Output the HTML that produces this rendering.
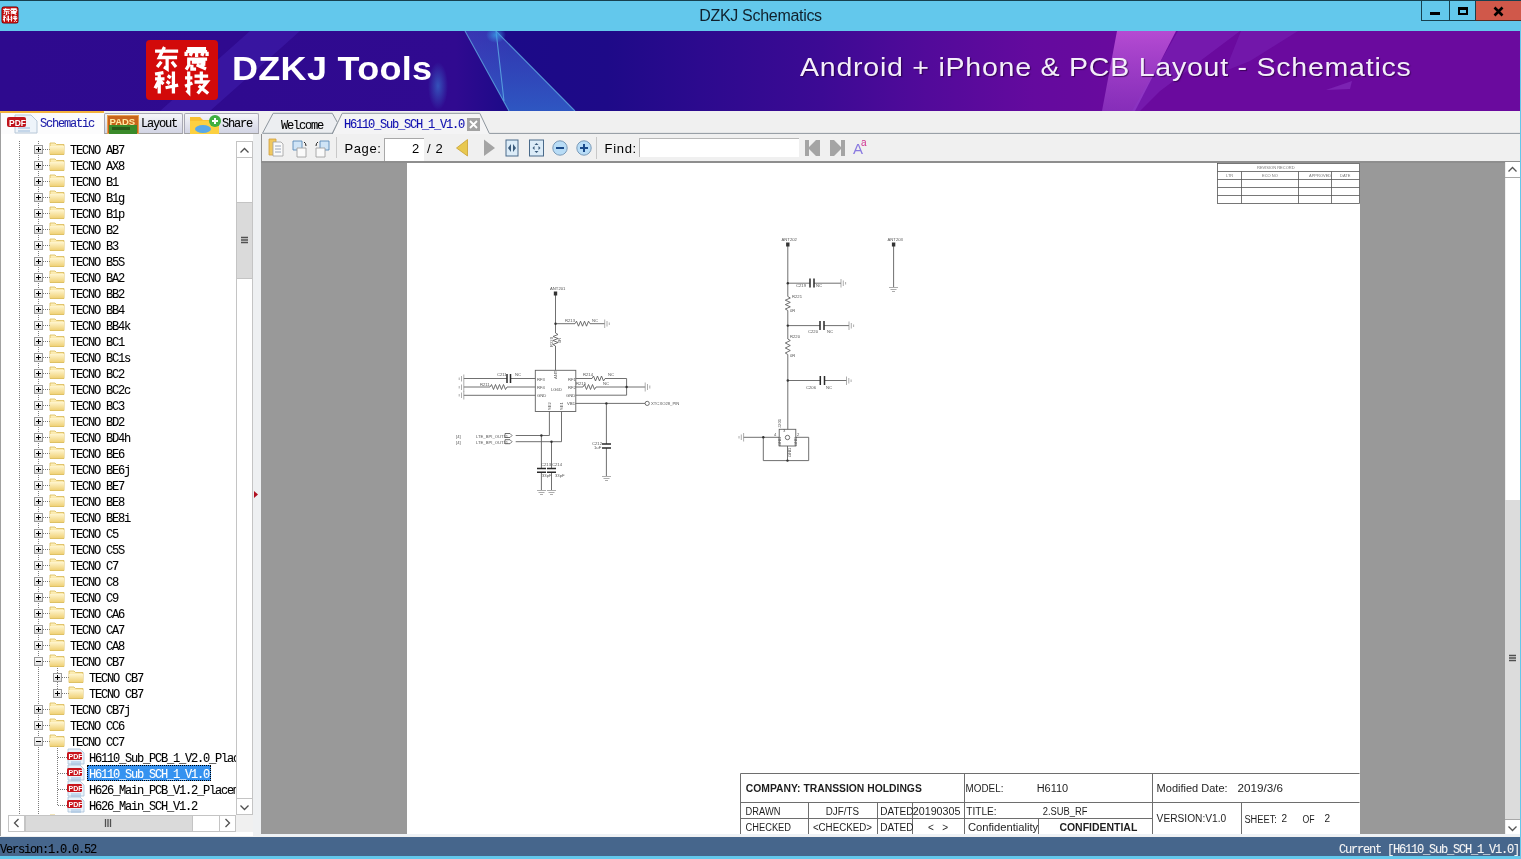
<!DOCTYPE html><html><head><meta charset="utf-8"><style>html,body{margin:0;padding:0}
body{width:1521px;height:859px;overflow:hidden;position:relative;background:#f0f0f0;font-family:"Liberation Sans",sans-serif;will-change:transform}
.a{position:absolute}
.mono{font-family:"Liberation Mono",monospace;font-size:12px;letter-spacing:-1.2px;white-space:pre;-webkit-text-stroke:0.1px currentColor}
#titlebar{left:0;top:0;width:1521px;height:31px;background:#63c8ec;border-top:1px solid #17404f;box-sizing:border-box}
#title{left:0;top:7px;width:1521px;text-align:center;font-size:16px;letter-spacing:-0.3px;color:#10202c}
.wb{top:1px;height:20px;box-sizing:border-box}
#banner{left:0;top:31px;width:1520px;height:80px;overflow:hidden;background:linear-gradient(90deg,#2f0a8f 0%,#2d0a8e 40%,#350a92 52%,#4c0a98 60%,#5e0a9c 68%,#6a0a9e 80%,#6a0a9e 100%)}
#tabstrip{left:0;top:111px;width:1520px;height:23px;background:#f0f0f0}
#toolbar{left:262px;top:134px;width:1258px;height:27px;background:#f0f0f0}
#tree{left:1px;top:134px;width:252px;height:702px;background:#fff;overflow:hidden}
#splitter{left:253px;top:134px;width:8px;height:702px;background:#eef0f2}
#docarea{left:261px;top:161px;width:1259px;height:675px;background:#999}
#status{left:0;top:837px;width:1520px;height:19px;background:#46668c}
#framebot{left:0;top:856px;width:1521px;height:3px;background:#63c8ec}
#frameright{left:1520px;top:31px;width:1px;height:825px;background:#63c8ec}
</style></head><body><div id="titlebar" class="a"></div>
<div class="a" style="left:2px;top:7px;width:16px;height:16px;background:#c00a0a;border-radius:2px;box-shadow:0 0 0 0.5px #600"></div>
<svg class="a" style="left:2px;top:7px" width="16" height="16"><g transform="scale(0.3)" stroke="#fff" stroke-width="3.6" fill="none">
<g transform="translate(3,4)"><path d="M1 4h22M10 0L5 10H22M12.5 10V21l-3-2M7 14L3 19M17 14L21 19"/></g>
<g transform="translate(27,4)"><path d="M2 2h20M12 2v7M2 5h20M2 5v4M22 5v4M3 11.5h19M4 11.5v9.5M7 14.5h14M7 17.5h12M11 17l10 4"/></g>
<g transform="translate(3,28)"><path d="M1 2.5l8-1.5M1 7h9M5 2v19M5 8l-4 8M13 4l3 2M12 9.5l3 2M11 15.5l12-2.5M18.5 0v21"/></g>
<g transform="translate(27,28)"><path d="M1 6h7M4.5 0v20M1 14l7-3M10 4.5h13M16.5 0v9M10 10h12l-9 11M14 13.5l9 7.5"/></g>
</g></svg>
<div id="title" class="a">DZKJ Schematics</div>
<div class="a wb" style="left:1421px;width:29px;border:1px solid #17404f;border-top:none;background:#63c8ec"></div>
<div class="a wb" style="left:1449px;width:27px;border:1px solid #17404f;border-top:none;background:#63c8ec"></div>
<div class="a wb" style="left:1475px;width:46px;background:#d0584a;border-bottom:1px solid #5a2a20;border-left:1px solid #17404f"></div>
<div class="a" style="left:1430px;top:12px;width:10px;height:3px;background:#000"></div>
<div class="a" style="left:1458px;top:7px;width:10px;height:8px;border:2px solid #000;box-sizing:border-box;border-top-width:3px"></div>
<svg class="a" style="left:1493px;top:6px" width="12" height="11"><path d="M1.5 1.5L9.5 9.5M9.5 1.5L1.5 9.5" stroke="#000" stroke-width="2.6"/></svg>
<div id="banner" class="a">
<svg width="1520" height="80" style="position:absolute;left:0;top:0">
<defs>
<linearGradient id="bg" x1="0" x2="1" y1="0" y2="0">
<stop offset="0" stop-color="#2e0a8e"/>
<stop offset="0.30" stop-color="#300a90"/>
<stop offset="0.335" stop-color="#1c0a88"/>
<stop offset="0.40" stop-color="#1e0a88"/>
<stop offset="0.46" stop-color="#2c0a8e"/>
<stop offset="0.54" stop-color="#3c0a94"/>
<stop offset="0.61" stop-color="#520a9a"/>
<stop offset="0.68" stop-color="#640a9e"/>
<stop offset="0.75" stop-color="#6a0a9e"/>
<stop offset="1" stop-color="#6a0a9e"/>
</linearGradient>
<linearGradient id="st1" x1="0" x2="0" y1="0" y2="1">
<stop offset="0" stop-color="#4a6ae0" stop-opacity="0.45"/>
<stop offset="1" stop-color="#3a8ae8" stop-opacity="0.6"/>
</linearGradient>
<linearGradient id="st2" x1="0" x2="0" y1="0" y2="1">
<stop offset="0" stop-color="#e070f0" stop-opacity="0.85"/>
<stop offset="1" stop-color="#b060e0" stop-opacity="0.55"/>
</linearGradient>
<radialGradient id="glow"><stop offset="0" stop-color="#3aa0e8" stop-opacity="0.8"/><stop offset="1" stop-color="#3aa0e8" stop-opacity="0"/></radialGradient>
</defs>
<rect width="1520" height="80" fill="url(#bg)"/>
<polygon points="250,0 300,0 210,80 160,80" fill="#4a2ac0" opacity="0.35"/>
<polygon points="465,0 496,0 575,80 509,80" fill="url(#st1)"/>
<path d="M465 0L509 80M496 0L504 70M496 0L575 80" stroke="#6ac8f0" stroke-width="1.1" fill="none" opacity="0.65"/>
<ellipse cx="496" cy="4" rx="10" ry="8" fill="url(#glow)"/>
<ellipse cx="438" cy="55" rx="10" ry="24" fill="url(#glow)" opacity="0.6"/>
<polygon points="1117,0 1176,0 1135,80 1102,80" fill="url(#st2)" opacity="0.75"/>
<polygon points="1178,0 1240,0 1160,60 1140,80 1132,80" fill="#9040d0" opacity="0.3"/>
<polygon points="1241,0 1298,0 1250,30 1225,40" fill="#8a40d0" opacity="0.25"/>
<polygon points="1326,59 1352,50 1350,58" fill="#9a50d8" opacity="0.35"/>
</svg>
<div class="a" style="left:146px;top:9px;width:72px;height:60px;background:#d20a0a;border-radius:4px"></div>
<svg class="a" style="left:146px;top:9px" width="72" height="60">
<g stroke="#fff" stroke-width="3.1" fill="none" stroke-linecap="butt">
<g transform="translate(8,7) scale(1.05)"><path d="M1 4h22M10 0L5 10H22M12.5 10V21l-3-2M7 14L3 19M17 14L21 19"/></g>
<g transform="translate(38,7) scale(1.05)"><path d="M3 1.5h18M12 1.5v8M2 4.5h20M2 4.5v4M22 4.5v4M5 6.5l3 1.2M16 6.5l3 1.2M3 11.5h19M4.5 11.5v6l-2.5 4M7.5 14.5h13M7.5 17v4h4M12 17l9 4M15 18.5l5-2.5"/></g>
<g transform="translate(8,31.5) scale(1.05)"><path d="M1 2.5l8-1.5M1 7h9M5 2v19M5 8l-4 8M5 8l4 4M13 4l3 2M12 9.5l3 2M11 15.5l12-2.5M18.5 0v21"/></g>
<g transform="translate(38,31.5) scale(1.05)"><path d="M1 6h7M4.5 0v20l-2-2M1 14l7-3M10 4.5h13M16.5 0v9M10 10h12l-9 11M14 13.5l9 7.5"/></g>
</g>
</svg>
<div class="a" style="left:232px;top:19px;font-size:33px;font-weight:bold;color:#fff;white-space:pre;letter-spacing:0.3px;transform:scaleX(1.09);transform-origin:0 0" id="dzkjt">DZKJ Tools</div>
<div class="a" style="left:800px;top:21px;font-size:26px;letter-spacing:0.66px;transform:scaleX(1.1);transform-origin:0 0;color:#f4eefa;white-space:pre;text-shadow:1px 1px 1px rgba(40,0,60,0.7)" id="andt">Android + iPhone &amp; PCB Layout - Schematics</div>
</div>
<div id="tabstrip" class="a"></div>
<!-- left panel tabs -->
<div class="a" style="left:0;top:111px;width:104px;height:24px;background:#fcfcfd;border-left:1px solid #a0a0a0;box-sizing:border-box"></div>
<div class="a" style="left:0;top:111px;width:104px;height:2px;background:#f3b23c"></div>
<div class="a" style="left:104px;top:113px;width:79px;height:21px;background:linear-gradient(#f6f6fa,#d2d4e4);border:1px solid #a8a8b4;border-bottom-color:#a0a0a0;box-sizing:border-box;border-radius:2px 2px 0 0"></div>
<div class="a" style="left:184px;top:113px;width:75px;height:21px;background:linear-gradient(#f6f6fa,#d2d4e4);border:1px solid #a8a8b4;border-bottom-color:#a0a0a0;box-sizing:border-box;border-radius:2px 2px 0 0"></div>
<!-- pdf icon -->
<svg class="a" style="left:6px;top:113px" width="34" height="21">
<path d="M9 2h16l6 6v12H9z" fill="#eef4fa" stroke="#b8c8d8" stroke-width="1"/>
<path d="M12 15h12M12 18h12" stroke="#9ab8d8" stroke-width="1"/>
<rect x="1" y="4" width="19" height="10" rx="2" fill="#c0141c"/>
<text x="3" y="12.5" font-family="Liberation Sans" font-weight="bold" font-size="8.5" fill="#fff">PDF</text>
</svg>
<div class="a mono" style="left:40px;top:117px;color:#1c1ca8">Schematic</div>
<!-- pads icon -->
<svg class="a" style="left:107px;top:115px" width="32" height="19">
<rect x="0.5" y="0.5" width="31" height="18" fill="#c8641c" stroke="#e8a050"/>
<rect x="2" y="10" width="28" height="9" fill="#3a8a2a"/>
<rect x="5" y="12" width="18" height="3" fill="#2a5a1a"/>
<text x="2.5" y="9.5" font-family="Liberation Sans" font-weight="bold" font-size="9.5" fill="#ffe8a0">PADS</text>
</svg>
<div class="a mono" style="left:141px;top:117px;color:#000">Layout</div>
<!-- share icon -->
<svg class="a" style="left:189px;top:114px" width="34" height="20">
<path d="M1 3h10l3 3h16v14H1z" fill="#f8c030"/>
<path d="M1 7h29v13H1z" fill="#fcd040"/>
<ellipse cx="14" cy="15" rx="8" ry="4" fill="#58a8e8"/>
<circle cx="26" cy="7" r="6" fill="#40b040"/>
<path d="M26 4v6M23 7h6" stroke="#fff" stroke-width="2"/>
</svg>
<div class="a mono" style="left:222px;top:117px;color:#000">Share</div>
<!-- doc tabs -->
<svg class="a" style="left:258px;top:111px" width="1262" height="24">
<path d="M4.5 22.3L15.1 2.3H74.3L79.6 11.8L74.3 22.3Z" fill="#eceef1" stroke="#8e969e" stroke-width="1"/>
<path d="M74.3 23L79.6 11.8L84.2 2.3H221.8L231.3 22.4H1262" fill="#f4f4f5" stroke="#8e969e" stroke-width="1"/>
<rect x="209" y="7" width="13" height="13" fill="#a2a2a2"/>
<path d="M212 10L219 17M219 10L212 17" stroke="#fff" stroke-width="1.8"/>
</svg>
<div class="a mono" style="left:281px;top:119px;color:#000">Welcome</div>
<div class="a mono" style="left:344px;top:118px;color:#1010b0">H6110_Sub_SCH_1_V1.0</div>
<!-- toolbar -->
<div id="toolbar" class="a"></div>
<div class="a" style="left:261px;top:134px;width:1px;height:27px;background:#909090"></div>
<svg class="a" style="left:262px;top:134px" width="1258" height="27">
<!-- open icon -->
<path d="M7 5h7v16H7z" fill="#f0c860" stroke="#d0a040" stroke-width="0.8"/>
<path d="M11 8h8l2 2v12H11z" fill="#fafafa" stroke="#a0a0a0" stroke-width="0.8"/>
<path d="M13 12h6M13 15h6M13 18h6" stroke="#8090a8" stroke-width="0.8"/>
<!-- page icons -->
<path d="M31 7h9v9h-9z" fill="#cfe4f6" stroke="#5a8ab8" stroke-width="0.9"/>
<path d="M35 14h9v9h-9z" fill="#fafafa" stroke="#a0a0a0" stroke-width="0.9"/>
<path d="M42 8q2 1 2 4" stroke="#222" stroke-width="1" fill="none"/>
<path d="M58 7h9v9h-9z" fill="#cfe4f6" stroke="#5a8ab8" stroke-width="0.9"/>
<path d="M54 14h9v9h-9z" fill="#fafafa" stroke="#a0a0a0" stroke-width="0.9"/>
<path d="M56 8q-2 1-2 4" stroke="#222" stroke-width="1" fill="none"/>
<path d="M74.5 3v21" stroke="#c8c8c8" stroke-width="1"/>
<!-- input box -->
<rect x="122" y="4" width="40" height="23" fill="#fff"/>
<path d="M122 4.5h40M122.5 4v23" stroke="#a8a8a8"/>
<!-- nav triangles -->
<path d="M205.5 5.5L194.5 14L205.5 22Z" fill="#e8c850" stroke="#c8a030" stroke-width="0.8"/>
<path d="M222 5.5L233 14L222 22Z" fill="#a4a4a4"/>
<!-- fit width -->
<rect x="244" y="6" width="12" height="16" fill="#dcecf8" stroke="#4a6a8a" stroke-width="1"/>
<path d="M249 10l-3 4 3 4zM251 10l3 4-3 4z" fill="#3a5a7a"/>
<!-- fit page -->
<rect x="267.5" y="6" width="14" height="16" fill="#dcecf8" stroke="#4a6a8a" stroke-width="1"/>
<path d="M274.5 9l-2 2h4zM274.5 19l-2-2h4zM270.5 14l2-2v4zM278.5 14l-2-2v4z" fill="#3a5a7a"/>
<!-- zoom out / in -->
<circle cx="298" cy="14" r="7.2" fill="#b8dcf6" stroke="#7a9ab8" stroke-width="1"/>
<path d="M294 14h8" stroke="#1a4a8a" stroke-width="2"/>
<circle cx="322" cy="14" r="7.2" fill="#b8dcf6" stroke="#7a9ab8" stroke-width="1"/>
<path d="M318 14h8M322 10v8" stroke="#1a4a8a" stroke-width="2"/>
<path d="M334.5 3v22" stroke="#c8c8c8" stroke-width="1"/>
<!-- find box -->
<rect x="377" y="4" width="160" height="19" fill="#fff"/>
<path d="M377 4.5h160M377.5 4v19" stroke="#b8b8b8"/>
<!-- prev/next -->
<path d="M543 6h4v7l7-7h4v16h-4l-7-7v7h-4z" fill="#a4a4a4"/>
<path d="M583 6h-4v7l-7-7h-4v16h4l7-7v7h4z" fill="#a4a4a4"/>
<text x="591" y="20" font-family="Liberation Sans" font-size="15" fill="#8a7ae0">A</text>
<text x="599" y="12" font-family="Liberation Sans" font-size="10" fill="#d03090">a</text>
</svg>
<div class="a" style="left:344.5px;top:141px;font-size:13px;letter-spacing:0.6px;color:#000">Page:</div>
<div class="a" style="left:412px;top:141px;font-size:13px;color:#000">2</div>
<div class="a" style="left:427px;top:141px;font-size:13px;letter-spacing:0.6px;color:#000">/ 2</div>
<div class="a" style="left:604.5px;top:141px;font-size:13px;letter-spacing:0.7px;color:#000">Find:</div>
<div class="a" style="left:262px;top:160.5px;width:1258px;height:1px;background:#a0a0a0"></div>
<div id="tree" class="a"></div><div id="splitter" class="a"></div><div class="a" style="left:0;top:134px;width:1px;height:702px;background:#a0a0a0"></div><div class="a" style="left:8px;top:141px;width:228px;height:674px;overflow:hidden"><svg width="228" height="674" style="position:absolute;left:0;top:0"><g transform="translate(-8,-141)"><defs><linearGradient id="exg" x1="0" x2="0" y1="0" y2="1"><stop offset="0" stop-color="#fff"/><stop offset="1" stop-color="#dcdcdc"/></linearGradient><linearGradient id="fg" x1="0" x2="0" y1="0" y2="1"><stop offset="0" stop-color="#fff2c0"/><stop offset="1" stop-color="#eccc70"/></linearGradient><linearGradient id="fg2" x1="0" x2="0" y1="0" y2="1"><stop offset="0" stop-color="#fff6d0"/><stop offset="1" stop-color="#f0d278"/></linearGradient></defs><g stroke="#7a7a7a" stroke-width="1" stroke-dasharray="1,1" fill="none"><path d="M19.5 141V815M38.5 141V815M57.5 666V693M57.5 746V805"/><path d="M43 149.5H50"/><path d="M43 165.5H50"/><path d="M43 181.5H50"/><path d="M43 197.5H50"/><path d="M43 213.5H50"/><path d="M43 229.5H50"/><path d="M43 245.5H50"/><path d="M43 261.5H50"/><path d="M43 277.5H50"/><path d="M43 293.5H50"/><path d="M43 309.5H50"/><path d="M43 325.5H50"/><path d="M43 341.5H50"/><path d="M43 357.5H50"/><path d="M43 373.5H50"/><path d="M43 389.5H50"/><path d="M43 405.5H50"/><path d="M43 421.5H50"/><path d="M43 437.5H50"/><path d="M43 453.5H50"/><path d="M43 469.5H50"/><path d="M43 485.5H50"/><path d="M43 501.5H50"/><path d="M43 517.5H50"/><path d="M43 533.5H50"/><path d="M43 549.5H50"/><path d="M43 565.5H50"/><path d="M43 581.5H50"/><path d="M43 597.5H50"/><path d="M43 613.5H50"/><path d="M43 629.5H50"/><path d="M43 645.5H50"/><path d="M43 661.5H50"/><path d="M62 677.5H69"/><path d="M62 693.5H69"/><path d="M43 709.5H50"/><path d="M43 725.5H50"/><path d="M43 741.5H50"/><path d="M58 757.5H67"/><path d="M58 773.5H67"/><path d="M58 789.5H67"/><path d="M58 805.5H67"/><path d="M43 821.5H50"/></g><rect x="34.5" y="145.5" width="8" height="8" fill="url(#exg)" stroke="#9a9a9a" stroke-width="1"/><path d="M36.0 149.5h5" stroke="#000" stroke-width="1"/><path d="M38.5 147.0v5" stroke="#000" stroke-width="1"/><path d="M50 143 h5 l1.5 1.5 h7.5 v10 h-14z" fill="url(#fg)" stroke="#d8b850" stroke-width="0.8"/><path d="M50 146 h14 v8 h-14z" fill="url(#fg2)"/><rect x="34.5" y="161.5" width="8" height="8" fill="url(#exg)" stroke="#9a9a9a" stroke-width="1"/><path d="M36.0 165.5h5" stroke="#000" stroke-width="1"/><path d="M38.5 163.0v5" stroke="#000" stroke-width="1"/><path d="M50 159 h5 l1.5 1.5 h7.5 v10 h-14z" fill="url(#fg)" stroke="#d8b850" stroke-width="0.8"/><path d="M50 162 h14 v8 h-14z" fill="url(#fg2)"/><rect x="34.5" y="177.5" width="8" height="8" fill="url(#exg)" stroke="#9a9a9a" stroke-width="1"/><path d="M36.0 181.5h5" stroke="#000" stroke-width="1"/><path d="M38.5 179.0v5" stroke="#000" stroke-width="1"/><path d="M50 175 h5 l1.5 1.5 h7.5 v10 h-14z" fill="url(#fg)" stroke="#d8b850" stroke-width="0.8"/><path d="M50 178 h14 v8 h-14z" fill="url(#fg2)"/><rect x="34.5" y="193.5" width="8" height="8" fill="url(#exg)" stroke="#9a9a9a" stroke-width="1"/><path d="M36.0 197.5h5" stroke="#000" stroke-width="1"/><path d="M38.5 195.0v5" stroke="#000" stroke-width="1"/><path d="M50 191 h5 l1.5 1.5 h7.5 v10 h-14z" fill="url(#fg)" stroke="#d8b850" stroke-width="0.8"/><path d="M50 194 h14 v8 h-14z" fill="url(#fg2)"/><rect x="34.5" y="209.5" width="8" height="8" fill="url(#exg)" stroke="#9a9a9a" stroke-width="1"/><path d="M36.0 213.5h5" stroke="#000" stroke-width="1"/><path d="M38.5 211.0v5" stroke="#000" stroke-width="1"/><path d="M50 207 h5 l1.5 1.5 h7.5 v10 h-14z" fill="url(#fg)" stroke="#d8b850" stroke-width="0.8"/><path d="M50 210 h14 v8 h-14z" fill="url(#fg2)"/><rect x="34.5" y="225.5" width="8" height="8" fill="url(#exg)" stroke="#9a9a9a" stroke-width="1"/><path d="M36.0 229.5h5" stroke="#000" stroke-width="1"/><path d="M38.5 227.0v5" stroke="#000" stroke-width="1"/><path d="M50 223 h5 l1.5 1.5 h7.5 v10 h-14z" fill="url(#fg)" stroke="#d8b850" stroke-width="0.8"/><path d="M50 226 h14 v8 h-14z" fill="url(#fg2)"/><rect x="34.5" y="241.5" width="8" height="8" fill="url(#exg)" stroke="#9a9a9a" stroke-width="1"/><path d="M36.0 245.5h5" stroke="#000" stroke-width="1"/><path d="M38.5 243.0v5" stroke="#000" stroke-width="1"/><path d="M50 239 h5 l1.5 1.5 h7.5 v10 h-14z" fill="url(#fg)" stroke="#d8b850" stroke-width="0.8"/><path d="M50 242 h14 v8 h-14z" fill="url(#fg2)"/><rect x="34.5" y="257.5" width="8" height="8" fill="url(#exg)" stroke="#9a9a9a" stroke-width="1"/><path d="M36.0 261.5h5" stroke="#000" stroke-width="1"/><path d="M38.5 259.0v5" stroke="#000" stroke-width="1"/><path d="M50 255 h5 l1.5 1.5 h7.5 v10 h-14z" fill="url(#fg)" stroke="#d8b850" stroke-width="0.8"/><path d="M50 258 h14 v8 h-14z" fill="url(#fg2)"/><rect x="34.5" y="273.5" width="8" height="8" fill="url(#exg)" stroke="#9a9a9a" stroke-width="1"/><path d="M36.0 277.5h5" stroke="#000" stroke-width="1"/><path d="M38.5 275.0v5" stroke="#000" stroke-width="1"/><path d="M50 271 h5 l1.5 1.5 h7.5 v10 h-14z" fill="url(#fg)" stroke="#d8b850" stroke-width="0.8"/><path d="M50 274 h14 v8 h-14z" fill="url(#fg2)"/><rect x="34.5" y="289.5" width="8" height="8" fill="url(#exg)" stroke="#9a9a9a" stroke-width="1"/><path d="M36.0 293.5h5" stroke="#000" stroke-width="1"/><path d="M38.5 291.0v5" stroke="#000" stroke-width="1"/><path d="M50 287 h5 l1.5 1.5 h7.5 v10 h-14z" fill="url(#fg)" stroke="#d8b850" stroke-width="0.8"/><path d="M50 290 h14 v8 h-14z" fill="url(#fg2)"/><rect x="34.5" y="305.5" width="8" height="8" fill="url(#exg)" stroke="#9a9a9a" stroke-width="1"/><path d="M36.0 309.5h5" stroke="#000" stroke-width="1"/><path d="M38.5 307.0v5" stroke="#000" stroke-width="1"/><path d="M50 303 h5 l1.5 1.5 h7.5 v10 h-14z" fill="url(#fg)" stroke="#d8b850" stroke-width="0.8"/><path d="M50 306 h14 v8 h-14z" fill="url(#fg2)"/><rect x="34.5" y="321.5" width="8" height="8" fill="url(#exg)" stroke="#9a9a9a" stroke-width="1"/><path d="M36.0 325.5h5" stroke="#000" stroke-width="1"/><path d="M38.5 323.0v5" stroke="#000" stroke-width="1"/><path d="M50 319 h5 l1.5 1.5 h7.5 v10 h-14z" fill="url(#fg)" stroke="#d8b850" stroke-width="0.8"/><path d="M50 322 h14 v8 h-14z" fill="url(#fg2)"/><rect x="34.5" y="337.5" width="8" height="8" fill="url(#exg)" stroke="#9a9a9a" stroke-width="1"/><path d="M36.0 341.5h5" stroke="#000" stroke-width="1"/><path d="M38.5 339.0v5" stroke="#000" stroke-width="1"/><path d="M50 335 h5 l1.5 1.5 h7.5 v10 h-14z" fill="url(#fg)" stroke="#d8b850" stroke-width="0.8"/><path d="M50 338 h14 v8 h-14z" fill="url(#fg2)"/><rect x="34.5" y="353.5" width="8" height="8" fill="url(#exg)" stroke="#9a9a9a" stroke-width="1"/><path d="M36.0 357.5h5" stroke="#000" stroke-width="1"/><path d="M38.5 355.0v5" stroke="#000" stroke-width="1"/><path d="M50 351 h5 l1.5 1.5 h7.5 v10 h-14z" fill="url(#fg)" stroke="#d8b850" stroke-width="0.8"/><path d="M50 354 h14 v8 h-14z" fill="url(#fg2)"/><rect x="34.5" y="369.5" width="8" height="8" fill="url(#exg)" stroke="#9a9a9a" stroke-width="1"/><path d="M36.0 373.5h5" stroke="#000" stroke-width="1"/><path d="M38.5 371.0v5" stroke="#000" stroke-width="1"/><path d="M50 367 h5 l1.5 1.5 h7.5 v10 h-14z" fill="url(#fg)" stroke="#d8b850" stroke-width="0.8"/><path d="M50 370 h14 v8 h-14z" fill="url(#fg2)"/><rect x="34.5" y="385.5" width="8" height="8" fill="url(#exg)" stroke="#9a9a9a" stroke-width="1"/><path d="M36.0 389.5h5" stroke="#000" stroke-width="1"/><path d="M38.5 387.0v5" stroke="#000" stroke-width="1"/><path d="M50 383 h5 l1.5 1.5 h7.5 v10 h-14z" fill="url(#fg)" stroke="#d8b850" stroke-width="0.8"/><path d="M50 386 h14 v8 h-14z" fill="url(#fg2)"/><rect x="34.5" y="401.5" width="8" height="8" fill="url(#exg)" stroke="#9a9a9a" stroke-width="1"/><path d="M36.0 405.5h5" stroke="#000" stroke-width="1"/><path d="M38.5 403.0v5" stroke="#000" stroke-width="1"/><path d="M50 399 h5 l1.5 1.5 h7.5 v10 h-14z" fill="url(#fg)" stroke="#d8b850" stroke-width="0.8"/><path d="M50 402 h14 v8 h-14z" fill="url(#fg2)"/><rect x="34.5" y="417.5" width="8" height="8" fill="url(#exg)" stroke="#9a9a9a" stroke-width="1"/><path d="M36.0 421.5h5" stroke="#000" stroke-width="1"/><path d="M38.5 419.0v5" stroke="#000" stroke-width="1"/><path d="M50 415 h5 l1.5 1.5 h7.5 v10 h-14z" fill="url(#fg)" stroke="#d8b850" stroke-width="0.8"/><path d="M50 418 h14 v8 h-14z" fill="url(#fg2)"/><rect x="34.5" y="433.5" width="8" height="8" fill="url(#exg)" stroke="#9a9a9a" stroke-width="1"/><path d="M36.0 437.5h5" stroke="#000" stroke-width="1"/><path d="M38.5 435.0v5" stroke="#000" stroke-width="1"/><path d="M50 431 h5 l1.5 1.5 h7.5 v10 h-14z" fill="url(#fg)" stroke="#d8b850" stroke-width="0.8"/><path d="M50 434 h14 v8 h-14z" fill="url(#fg2)"/><rect x="34.5" y="449.5" width="8" height="8" fill="url(#exg)" stroke="#9a9a9a" stroke-width="1"/><path d="M36.0 453.5h5" stroke="#000" stroke-width="1"/><path d="M38.5 451.0v5" stroke="#000" stroke-width="1"/><path d="M50 447 h5 l1.5 1.5 h7.5 v10 h-14z" fill="url(#fg)" stroke="#d8b850" stroke-width="0.8"/><path d="M50 450 h14 v8 h-14z" fill="url(#fg2)"/><rect x="34.5" y="465.5" width="8" height="8" fill="url(#exg)" stroke="#9a9a9a" stroke-width="1"/><path d="M36.0 469.5h5" stroke="#000" stroke-width="1"/><path d="M38.5 467.0v5" stroke="#000" stroke-width="1"/><path d="M50 463 h5 l1.5 1.5 h7.5 v10 h-14z" fill="url(#fg)" stroke="#d8b850" stroke-width="0.8"/><path d="M50 466 h14 v8 h-14z" fill="url(#fg2)"/><rect x="34.5" y="481.5" width="8" height="8" fill="url(#exg)" stroke="#9a9a9a" stroke-width="1"/><path d="M36.0 485.5h5" stroke="#000" stroke-width="1"/><path d="M38.5 483.0v5" stroke="#000" stroke-width="1"/><path d="M50 479 h5 l1.5 1.5 h7.5 v10 h-14z" fill="url(#fg)" stroke="#d8b850" stroke-width="0.8"/><path d="M50 482 h14 v8 h-14z" fill="url(#fg2)"/><rect x="34.5" y="497.5" width="8" height="8" fill="url(#exg)" stroke="#9a9a9a" stroke-width="1"/><path d="M36.0 501.5h5" stroke="#000" stroke-width="1"/><path d="M38.5 499.0v5" stroke="#000" stroke-width="1"/><path d="M50 495 h5 l1.5 1.5 h7.5 v10 h-14z" fill="url(#fg)" stroke="#d8b850" stroke-width="0.8"/><path d="M50 498 h14 v8 h-14z" fill="url(#fg2)"/><rect x="34.5" y="513.5" width="8" height="8" fill="url(#exg)" stroke="#9a9a9a" stroke-width="1"/><path d="M36.0 517.5h5" stroke="#000" stroke-width="1"/><path d="M38.5 515.0v5" stroke="#000" stroke-width="1"/><path d="M50 511 h5 l1.5 1.5 h7.5 v10 h-14z" fill="url(#fg)" stroke="#d8b850" stroke-width="0.8"/><path d="M50 514 h14 v8 h-14z" fill="url(#fg2)"/><rect x="34.5" y="529.5" width="8" height="8" fill="url(#exg)" stroke="#9a9a9a" stroke-width="1"/><path d="M36.0 533.5h5" stroke="#000" stroke-width="1"/><path d="M38.5 531.0v5" stroke="#000" stroke-width="1"/><path d="M50 527 h5 l1.5 1.5 h7.5 v10 h-14z" fill="url(#fg)" stroke="#d8b850" stroke-width="0.8"/><path d="M50 530 h14 v8 h-14z" fill="url(#fg2)"/><rect x="34.5" y="545.5" width="8" height="8" fill="url(#exg)" stroke="#9a9a9a" stroke-width="1"/><path d="M36.0 549.5h5" stroke="#000" stroke-width="1"/><path d="M38.5 547.0v5" stroke="#000" stroke-width="1"/><path d="M50 543 h5 l1.5 1.5 h7.5 v10 h-14z" fill="url(#fg)" stroke="#d8b850" stroke-width="0.8"/><path d="M50 546 h14 v8 h-14z" fill="url(#fg2)"/><rect x="34.5" y="561.5" width="8" height="8" fill="url(#exg)" stroke="#9a9a9a" stroke-width="1"/><path d="M36.0 565.5h5" stroke="#000" stroke-width="1"/><path d="M38.5 563.0v5" stroke="#000" stroke-width="1"/><path d="M50 559 h5 l1.5 1.5 h7.5 v10 h-14z" fill="url(#fg)" stroke="#d8b850" stroke-width="0.8"/><path d="M50 562 h14 v8 h-14z" fill="url(#fg2)"/><rect x="34.5" y="577.5" width="8" height="8" fill="url(#exg)" stroke="#9a9a9a" stroke-width="1"/><path d="M36.0 581.5h5" stroke="#000" stroke-width="1"/><path d="M38.5 579.0v5" stroke="#000" stroke-width="1"/><path d="M50 575 h5 l1.5 1.5 h7.5 v10 h-14z" fill="url(#fg)" stroke="#d8b850" stroke-width="0.8"/><path d="M50 578 h14 v8 h-14z" fill="url(#fg2)"/><rect x="34.5" y="593.5" width="8" height="8" fill="url(#exg)" stroke="#9a9a9a" stroke-width="1"/><path d="M36.0 597.5h5" stroke="#000" stroke-width="1"/><path d="M38.5 595.0v5" stroke="#000" stroke-width="1"/><path d="M50 591 h5 l1.5 1.5 h7.5 v10 h-14z" fill="url(#fg)" stroke="#d8b850" stroke-width="0.8"/><path d="M50 594 h14 v8 h-14z" fill="url(#fg2)"/><rect x="34.5" y="609.5" width="8" height="8" fill="url(#exg)" stroke="#9a9a9a" stroke-width="1"/><path d="M36.0 613.5h5" stroke="#000" stroke-width="1"/><path d="M38.5 611.0v5" stroke="#000" stroke-width="1"/><path d="M50 607 h5 l1.5 1.5 h7.5 v10 h-14z" fill="url(#fg)" stroke="#d8b850" stroke-width="0.8"/><path d="M50 610 h14 v8 h-14z" fill="url(#fg2)"/><rect x="34.5" y="625.5" width="8" height="8" fill="url(#exg)" stroke="#9a9a9a" stroke-width="1"/><path d="M36.0 629.5h5" stroke="#000" stroke-width="1"/><path d="M38.5 627.0v5" stroke="#000" stroke-width="1"/><path d="M50 623 h5 l1.5 1.5 h7.5 v10 h-14z" fill="url(#fg)" stroke="#d8b850" stroke-width="0.8"/><path d="M50 626 h14 v8 h-14z" fill="url(#fg2)"/><rect x="34.5" y="641.5" width="8" height="8" fill="url(#exg)" stroke="#9a9a9a" stroke-width="1"/><path d="M36.0 645.5h5" stroke="#000" stroke-width="1"/><path d="M38.5 643.0v5" stroke="#000" stroke-width="1"/><path d="M50 639 h5 l1.5 1.5 h7.5 v10 h-14z" fill="url(#fg)" stroke="#d8b850" stroke-width="0.8"/><path d="M50 642 h14 v8 h-14z" fill="url(#fg2)"/><rect x="34.5" y="657.5" width="8" height="8" fill="url(#exg)" stroke="#9a9a9a" stroke-width="1"/><path d="M36.0 661.5h5" stroke="#000" stroke-width="1"/><path d="M50 655 h5 l1.5 1.5 h7.5 v10 h-14z" fill="url(#fg)" stroke="#d8b850" stroke-width="0.8"/><path d="M50 658 h14 v8 h-14z" fill="url(#fg2)"/><rect x="53.5" y="673.5" width="8" height="8" fill="url(#exg)" stroke="#9a9a9a" stroke-width="1"/><path d="M55.0 677.5h5" stroke="#000" stroke-width="1"/><path d="M57.5 675.0v5" stroke="#000" stroke-width="1"/><path d="M69 671 h5 l1.5 1.5 h7.5 v10 h-14z" fill="url(#fg)" stroke="#d8b850" stroke-width="0.8"/><path d="M69 674 h14 v8 h-14z" fill="url(#fg2)"/><rect x="53.5" y="689.5" width="8" height="8" fill="url(#exg)" stroke="#9a9a9a" stroke-width="1"/><path d="M55.0 693.5h5" stroke="#000" stroke-width="1"/><path d="M57.5 691.0v5" stroke="#000" stroke-width="1"/><path d="M69 687 h5 l1.5 1.5 h7.5 v10 h-14z" fill="url(#fg)" stroke="#d8b850" stroke-width="0.8"/><path d="M69 690 h14 v8 h-14z" fill="url(#fg2)"/><rect x="34.5" y="705.5" width="8" height="8" fill="url(#exg)" stroke="#9a9a9a" stroke-width="1"/><path d="M36.0 709.5h5" stroke="#000" stroke-width="1"/><path d="M38.5 707.0v5" stroke="#000" stroke-width="1"/><path d="M50 703 h5 l1.5 1.5 h7.5 v10 h-14z" fill="url(#fg)" stroke="#d8b850" stroke-width="0.8"/><path d="M50 706 h14 v8 h-14z" fill="url(#fg2)"/><rect x="34.5" y="721.5" width="8" height="8" fill="url(#exg)" stroke="#9a9a9a" stroke-width="1"/><path d="M36.0 725.5h5" stroke="#000" stroke-width="1"/><path d="M38.5 723.0v5" stroke="#000" stroke-width="1"/><path d="M50 719 h5 l1.5 1.5 h7.5 v10 h-14z" fill="url(#fg)" stroke="#d8b850" stroke-width="0.8"/><path d="M50 722 h14 v8 h-14z" fill="url(#fg2)"/><rect x="34.5" y="737.5" width="8" height="8" fill="url(#exg)" stroke="#9a9a9a" stroke-width="1"/><path d="M36.0 741.5h5" stroke="#000" stroke-width="1"/><path d="M50 735 h5 l1.5 1.5 h7.5 v10 h-14z" fill="url(#fg)" stroke="#d8b850" stroke-width="0.8"/><path d="M50 738 h14 v8 h-14z" fill="url(#fg2)"/><path d="M68 749 h12 l4 4 v11 h-16z" fill="#e8f2fa" stroke="#a8c0d8" stroke-width="0.8"/><path d="M71 762 h10 M71 764 h10" stroke="#8ab0d8" stroke-width="0.8"/><rect x="67" y="752" width="15" height="8" rx="1.5" fill="#c8141c"/><text x="68.5" y="758.8" font-family="Liberation Sans" font-weight="bold" font-size="7" fill="#fff">PDF</text><path d="M68 765 h12 l4 4 v11 h-16z" fill="#e8f2fa" stroke="#a8c0d8" stroke-width="0.8"/><path d="M71 778 h10 M71 780 h10" stroke="#8ab0d8" stroke-width="0.8"/><rect x="67" y="768" width="15" height="8" rx="1.5" fill="#c8141c"/><text x="68.5" y="774.8" font-family="Liberation Sans" font-weight="bold" font-size="7" fill="#fff">PDF</text><path d="M68 781 h12 l4 4 v11 h-16z" fill="#e8f2fa" stroke="#a8c0d8" stroke-width="0.8"/><path d="M71 794 h10 M71 796 h10" stroke="#8ab0d8" stroke-width="0.8"/><rect x="67" y="784" width="15" height="8" rx="1.5" fill="#c8141c"/><text x="68.5" y="790.8" font-family="Liberation Sans" font-weight="bold" font-size="7" fill="#fff">PDF</text><path d="M68 797 h12 l4 4 v11 h-16z" fill="#e8f2fa" stroke="#a8c0d8" stroke-width="0.8"/><path d="M71 810 h10 M71 812 h10" stroke="#8ab0d8" stroke-width="0.8"/><rect x="67" y="800" width="15" height="8" rx="1.5" fill="#c8141c"/><text x="68.5" y="806.8" font-family="Liberation Sans" font-weight="bold" font-size="7" fill="#fff">PDF</text><rect x="34.5" y="817.5" width="8" height="8" fill="url(#exg)" stroke="#9a9a9a" stroke-width="1"/><path d="M36.0 821.5h5" stroke="#000" stroke-width="1"/><path d="M38.5 819.0v5" stroke="#000" stroke-width="1"/><path d="M50 815 h5 l1.5 1.5 h7.5 v10 h-14z" fill="url(#fg)" stroke="#d8b850" stroke-width="0.8"/><path d="M50 818 h14 v8 h-14z" fill="url(#fg2)"/></g></svg><div class="a mono" style="left:62px;top:3px;color:#000">TECNO AB7</div><div class="a mono" style="left:62px;top:19px;color:#000">TECNO AX8</div><div class="a mono" style="left:62px;top:35px;color:#000">TECNO B1</div><div class="a mono" style="left:62px;top:51px;color:#000">TECNO B1g</div><div class="a mono" style="left:62px;top:67px;color:#000">TECNO B1p</div><div class="a mono" style="left:62px;top:83px;color:#000">TECNO B2</div><div class="a mono" style="left:62px;top:99px;color:#000">TECNO B3</div><div class="a mono" style="left:62px;top:115px;color:#000">TECNO B5S</div><div class="a mono" style="left:62px;top:131px;color:#000">TECNO BA2</div><div class="a mono" style="left:62px;top:147px;color:#000">TECNO BB2</div><div class="a mono" style="left:62px;top:163px;color:#000">TECNO BB4</div><div class="a mono" style="left:62px;top:179px;color:#000">TECNO BB4k</div><div class="a mono" style="left:62px;top:195px;color:#000">TECNO BC1</div><div class="a mono" style="left:62px;top:211px;color:#000">TECNO BC1s</div><div class="a mono" style="left:62px;top:227px;color:#000">TECNO BC2</div><div class="a mono" style="left:62px;top:243px;color:#000">TECNO BC2c</div><div class="a mono" style="left:62px;top:259px;color:#000">TECNO BC3</div><div class="a mono" style="left:62px;top:275px;color:#000">TECNO BD2</div><div class="a mono" style="left:62px;top:291px;color:#000">TECNO BD4h</div><div class="a mono" style="left:62px;top:307px;color:#000">TECNO BE6</div><div class="a mono" style="left:62px;top:323px;color:#000">TECNO BE6j</div><div class="a mono" style="left:62px;top:339px;color:#000">TECNO BE7</div><div class="a mono" style="left:62px;top:355px;color:#000">TECNO BE8</div><div class="a mono" style="left:62px;top:371px;color:#000">TECNO BE8i</div><div class="a mono" style="left:62px;top:387px;color:#000">TECNO C5</div><div class="a mono" style="left:62px;top:403px;color:#000">TECNO C5S</div><div class="a mono" style="left:62px;top:419px;color:#000">TECNO C7</div><div class="a mono" style="left:62px;top:435px;color:#000">TECNO C8</div><div class="a mono" style="left:62px;top:451px;color:#000">TECNO C9</div><div class="a mono" style="left:62px;top:467px;color:#000">TECNO CA6</div><div class="a mono" style="left:62px;top:483px;color:#000">TECNO CA7</div><div class="a mono" style="left:62px;top:499px;color:#000">TECNO CA8</div><div class="a mono" style="left:62px;top:515px;color:#000">TECNO CB7</div><div class="a mono" style="left:81px;top:531px;color:#000">TECNO CB7</div><div class="a mono" style="left:81px;top:547px;color:#000">TECNO CB7</div><div class="a mono" style="left:62px;top:563px;color:#000">TECNO CB7j</div><div class="a mono" style="left:62px;top:579px;color:#000">TECNO CC6</div><div class="a mono" style="left:62px;top:595px;color:#000">TECNO CC7</div><div class="a mono" style="left:81px;top:611px;color:#000">H6110_Sub_PCB_1_V2.0_Placement</div><div class="a" style="left:79px;top:624px;width:124px;height:16px;background:#3592f0;outline:1px dotted #000;outline-offset:-1px"></div><div class="a mono" style="left:81px;top:627px;color:#fff">H6110_Sub_SCH_1_V1.0</div><div class="a mono" style="left:81px;top:643px;color:#000">H626_Main_PCB_V1.2_Placement</div><div class="a mono" style="left:81px;top:659px;color:#000">H626_Main_SCH_V1.2</div><div class="a mono" style="left:62px;top:675px;color:#000">TECNO CD6</div></div><div class="a" style="left:236px;top:141px;width:17px;height:674px;background:#fff;border:1px solid #c4c4c4;box-sizing:border-box"></div>
<div class="a" style="left:236px;top:202px;width:17px;height:77px;background:#dadada;border:1px solid #c4c4c4;box-sizing:border-box"></div>
<div class="a" style="left:236px;top:157px;width:17px;height:1px;background:#c4c4c4"></div>
<div class="a" style="left:236px;top:798px;width:17px;height:1px;background:#c4c4c4"></div>
<div class="a" style="left:8px;top:815px;width:228px;height:17px;background:#fff;border:1px solid #c4c4c4;box-sizing:border-box"></div>
<div class="a" style="left:25px;top:815px;width:168px;height:17px;background:#dadada;border:1px solid #c4c4c4;box-sizing:border-box"></div>
<div class="a" style="left:219px;top:815px;width:1px;height:17px;background:#c4c4c4"></div>
<div class="a" style="left:24px;top:815px;width:1px;height:17px;background:#c4c4c4"></div>
<div class="a" style="left:236px;top:815px;width:17px;height:17px;background:#f0f0f0"></div>
<svg class="a" style="left:0;top:134px" width="261" height="702"><g fill="none" stroke="#505050" stroke-width="1.3">
<path d="M240.5 18.5L244.5 14.5L248.5 18.5"/><path d="M240.5 671.5L244.5 675.5L248.5 671.5"/>
<path d="M18.5 685L14.5 689L18.5 693"/><path d="M225.5 685L229.5 689L225.5 693"/></g>
<g stroke="#505050" stroke-width="1.3"><path d="M241 103.5h7M241 106h7M241 108.5h7"/><path d="M105.5 685v8M108 685v8M110.5 685v8"/></g>
<path d="M254 357l4 3.5-4 3.5z" fill="#b01020"/>
</svg><div id="docarea" class="a"></div>
<div class="a" style="left:261px;top:161px;width:1259px;height:2px;background:#8e8e8e"></div>
<div class="a" style="left:407px;top:163px;width:953px;height:671px;background:#fff;overflow:hidden">
<svg width="953" height="672" style="position:absolute;left:0;top:0" id="sch">
<g transform="translate(-407,-163)">
<g fill="none" stroke="#555" stroke-width="0.8">
<!-- revision table -->
<rect x="1217.5" y="163.5" width="142" height="40"/>
<path d="M1217.5 171.5h142M1217.5 179.5h142M1217.5 187.5h142M1217.5 195.5h142M1241.5 171.5v32M1298.5 171.5v32M1331.5 171.5v32"/>
</g>
<g fill="#777" font-family="Liberation Sans" font-size="4">
<text x="1257" y="169">REVISION RECORD</text>
<text x="1226" y="177">LTR</text><text x="1262" y="177">ECO NO</text><text x="1309" y="177">APPROVED</text><text x="1340" y="177">DATE</text>
</g>
<g fill="none" stroke="#606060" stroke-width="0.9">
<!-- left schematic -->
<path d="M555.5 295V333l2.5 1.5-5 2 5 2-5 2 5 2-5 2 2.5 1.5V370.3"/>
<path d="M555.5 323.7H575l1.5-2.5 2 5 2-5 2 5 2-5 2 5 2-5 1.5 2.5H604.7"/>

<rect x="535.3" y="370.3" width="40.5" height="41.2"/>
<path d="M463.8 378.5H507M510.5 378.5H535.3"/>
<path d="M463.8 387H490l1.5-2.5 2 5 2-5 2 5 2-5 2 5 2-5 2 5 1.5-2.5H535.3"/>
<path d="M463.8 395.3H535.3"/>

<path d="M575.8 378.5H592l1.5-2.5 2 5 2-5 2 5 2-5 2 5 1.5-2.5H626.6V395.2H575.8"/>
<path d="M575.8 387H583l1.5-2.5 2 5 2-5 2 5 2-5 2 5 1.5-2.5H645.2"/>

<path d="M575.8 403.4H645"/>
<circle cx="647.2" cy="403.4" r="2.1"/>
<path d="M606.4 403.4V444M606.4 448V476"/><path d="M602 476.5h9M603.5 478.5h6M605 480.5h3" stroke="#8a8a8a" stroke-width="0.7"/>
<path d="M549.4 411.5V435.5H515.7M561.5 411.5V441.7H515.7"/>
<path d="M541.4 435.5V468.5M541.4 472.3V490"/><path d="M537 490.5h9M538.5 492.5h6M540 494.5h3" stroke="#8a8a8a" stroke-width="0.7"/>
<path d="M551.5 441.7V468.5M551.5 472.3V490"/><path d="M547 490.5h9M548.5 492.5h6M550 494.5h3" stroke="#8a8a8a" stroke-width="0.7"/>
<path d="M505 433.5h5l2 2-2 2h-5zM505 439.7h5l2 2-2 2h-5z"/>
<!-- right schematic -->
<path d="M787.8 246V296.5l2.5 1.5-5 2.2 5 2.2-5 2.2 5 2.2-5 2.2 2.5 1.5V339l2.5 1.5-5 2.5 5 2.5-5 2.5 5 2.5-5 2.5 2.5 1.5V429.3"/>
<path d="M787.8 283.2H810M814 283.2H841"/>
<path d="M787.8 325.6H820M824 325.6H849"/>
<path d="M787.8 380.5H820.3M824.5 380.5H846.5"/>
<rect x="779.2" y="429.3" width="16.6" height="16.7"/>
<circle cx="787.5" cy="437.5" r="2.2"/>
<path d="M743.6 437.3H779.2M763.3 437.3V460.6H808.7V437.3H795.8M787.5 446V460.6"/>

<path d="M893.6 246V287"/><path d="M889 287.5h9M890.5 289.5h6M892 291.5h3" stroke="#8a8a8a" stroke-width="0.7"/>
</g>
<g fill="none" stroke="#2a2a2a" stroke-width="1.5">
<path d="M507 374v9M510.5 374v9M602 444h9M602 448h9M537 468.5h9M537 472.3h9M547 468.5h9M547 472.3h9"/>
<path d="M810 278.5v9M814 278.5v9M820 321v9M824 321v9M820.3 376v9M824.5 376v9"/>
</g>
<g fill="none" stroke="#8a8a8a" stroke-width="0.7">
<path d="M604.7 319.5v8.5M607 321v5.5M609.3 322.5v2.5"/>
<path d="M645.2 382.5v9M647.5 384v6M649.8 385.5v3"/>
<path d="M841 279v8.5M843.3 280.5v5.5M845.6 282v2.5"/>
<path d="M849 321.5v8.5M851.3 323v5.5M853.6 324.5v2.5"/>
<path d="M846.5 376.5v8.5M848.8 378v5.5M851.1 379.5v2.5"/>
<path d="M743.6 433v8.5M741.3 434.5v5.5M739 436v2.5"/>
<path d="M463.8 374.5v8.5M461.5 376v5.5M459.2 377.5v2.5M463.8 383v8.5M461.5 384.5v5.5M459.2 386v2.5M463.8 391v8.5M461.5 392.5v5.5M459.2 394v2.5"/>
</g>
<g fill="#333">
<rect x="553.8" y="291.5" width="3.4" height="4"/>
<rect x="786.1" y="242.5" width="3.4" height="4"/>
<rect x="891.9" y="242.5" width="3.4" height="4"/>
<circle cx="555.5" cy="323.7" r="1.2"/><circle cx="626.6" cy="387" r="1.2"/><circle cx="606.4" cy="403.4" r="1.2"/>
<circle cx="541.4" cy="435.5" r="1.2"/><circle cx="551.5" cy="441.7" r="1.2"/>
<circle cx="787.8" cy="283.2" r="1.2"/><circle cx="787.8" cy="325.6" r="1.2"/><circle cx="787.8" cy="380.5" r="1.2"/>
<circle cx="763.3" cy="437.3" r="1.2"/><circle cx="787.5" cy="460.6" r="1.2"/>
</g>
<g fill="#555" font-family="Liberation Sans" font-size="4.2">
<text x="550" y="290">ANT201</text>
<text x="781.5" y="241">ANT202</text><text x="887.5" y="241">ANT203</text>
<text x="565" y="322">R213</text><text x="592" y="322">NC</text>
<text x="497" y="376">C211</text><text x="515" y="376">NC</text>
<text x="480" y="386">R211</text>
<text x="537" y="380.5">RF3</text><text x="537" y="389">RF4</text><text x="537" y="397.3">GND</text>
<text x="568" y="380.5">RF1</text><text x="568" y="389">RF2</text><text x="566" y="397.3">GND</text><text x="567" y="405.4">VBD</text>
<text x="551" y="391">LG6D</text>
<text x="583" y="376">R214</text><text x="608" y="376">NC</text>
<text x="576" y="385">R215</text><text x="603" y="385">NC</text>
<text x="651" y="405">XTCXO28_PIN</text>
<text x="456" y="437.5">[4]</text><text x="456" y="443.5">[4]</text>
<text x="476" y="437.5">LTE_BPI_OUT11</text><text x="476" y="443.5">LTE_BPI_OUT11</text>
<text x="541" y="466">C213</text><text x="552" y="466">C214</text>
<text x="542" y="477">33pF</text><text x="555" y="477">33pF</text>
<text x="592" y="445">C212</text><text x="594" y="449">1uF</text>
<text x="796" y="287">C219</text><text x="816" y="287">NC</text>
<text x="792" y="298">R221</text><text x="790" y="312">0R</text>
<text x="808" y="333">C220</text><text x="827" y="333">NC</text>
<text x="790" y="338">R220</text><text x="790" y="357">0R</text>
<text x="806" y="389">C206</text><text x="826" y="389">NC</text>
<text transform="translate(553,347) rotate(-90)">R220</text>
<text transform="translate(561,343) rotate(-90)">0R</text>
<text transform="translate(557,379) rotate(-90)">ANT</text>
<text transform="translate(551,410) rotate(-90)">SE2</text>
<text transform="translate(563,410) rotate(-90)">SE1</text>
<text transform="translate(781,428) rotate(-90)">J201</text>
<text transform="translate(781,446) rotate(-90)">GND</text>
<text transform="translate(797,446) rotate(-90)">GND</text>
<text transform="translate(791,457) rotate(-90)">GND</text>
<text x="783" y="432">3</text><text x="797" y="436">2</text><text x="774" y="436">4</text>

</g>
</g>
<g transform="translate(-407,-163)">
<g fill="none" stroke="#6e6e6e" stroke-width="1">
<path d="M740.5 834V773.5H1359.5M740.5 802.5H1359.5M740.5 818.5H1152.5M808.5 802.5V834M877.5 802.5V834M912.5 802.5V834M964.5 773.5V834M1038.5 818.5V834M1152.5 773.5V834M1241.5 802.5V834"/>
</g>
<g fill="#1e1e1e" font-family="Liberation Sans" font-size="10">
<text x="745.8" y="792" font-weight="bold" textLength="176" lengthAdjust="spacingAndGlyphs">COMPANY: TRANSSION HOLDINGS</text>
<text x="965.6" y="792" textLength="37.8" lengthAdjust="spacingAndGlyphs">MODEL:</text>
<text x="1036.7" y="792" textLength="31.5" lengthAdjust="spacingAndGlyphs">H6110</text>
<text x="1156.6" y="792" textLength="71" lengthAdjust="spacingAndGlyphs">Modified Date:</text>
<text x="1237.6" y="792" textLength="45.4" lengthAdjust="spacingAndGlyphs">2019/3/6</text>
<text x="745.6" y="814.5" textLength="34.8" lengthAdjust="spacingAndGlyphs">DRAWN</text>
<text x="825.8" y="814.5" textLength="33.2" lengthAdjust="spacingAndGlyphs">DJF/TS</text>
<text x="880.2" y="815" textLength="33.3" lengthAdjust="spacingAndGlyphs">DATED</text>
<text x="912.8" y="814.5" textLength="47.6" lengthAdjust="spacingAndGlyphs">20190305</text>
<text x="966.3" y="815" textLength="30.3" lengthAdjust="spacingAndGlyphs">TITLE:</text>
<text x="1042.7" y="814.5" textLength="44.7" lengthAdjust="spacingAndGlyphs">2.SUB_RF</text>
<text x="1156.6" y="822.3" textLength="69.6" lengthAdjust="spacingAndGlyphs">VERSION:V1.0</text>
<text x="1244.4" y="822.8" textLength="32.5" lengthAdjust="spacingAndGlyphs">SHEET:</text>
<text x="1281.5" y="822.3">2</text>
<text x="1302.6" y="822.8" textLength="12.1" lengthAdjust="spacingAndGlyphs">OF</text>
<text x="1324.6" y="822.3">2</text>
<text x="745.6" y="830.9" textLength="45.4" lengthAdjust="spacingAndGlyphs">CHECKED</text>
<text x="812.9" y="830.9" textLength="59" lengthAdjust="spacingAndGlyphs">&lt;CHECKED&gt;</text>
<text x="880.2" y="830.9" textLength="33.3" lengthAdjust="spacingAndGlyphs">DATED</text>
<text x="927.9" y="830.9">&lt;</text><text x="942.3" y="830.9">&gt;</text>
<text x="967.9" y="830.9" textLength="70.3" lengthAdjust="spacingAndGlyphs">Confidentiality</text>
<text x="1059.4" y="830.9" font-weight="bold" textLength="77.9" lengthAdjust="spacingAndGlyphs">CONFIDENTIAL</text>
</g>
</g>

</svg>
</div>
<div class="a" style="left:261px;top:834px;width:1259px;height:2px;background:#eef2f6"></div>
<!-- vertical scrollbar -->
<div class="a" style="left:1505px;top:162px;width:15px;height:672px;background:#fff;border-left:1px solid #f0f0f0;box-sizing:border-box"></div>
<div class="a" style="left:1505px;top:500px;width:15px;height:319px;background:#dcdcdc"></div>
<div class="a" style="left:1505px;top:177px;width:15px;height:1px;background:#a8a8a8"></div>
<div class="a" style="left:1505px;top:819px;width:15px;height:1px;background:#a8a8a8"></div>
<svg class="a" style="left:1505px;top:162px" width="15" height="672"><g fill="none" stroke="#555" stroke-width="1.3"><path d="M3.5 9.5L7.5 5.5L11.5 9.5"/><path d="M3.5 664.5L7.5 668.5L11.5 664.5" /></g><g stroke="#505050" stroke-width="1.3"><path d="M4 493.5h7M4 496h7M4 498.5h7"/></g></svg>
<div id="status" class="a"></div>
<div class="a mono" style="left:0;top:843px;color:#000">Version:1.0.0.52</div>
<div class="a mono" style="left:1339px;top:843px;color:#f4f4f4">Current [H6110_Sub_SCH_1_V1.0]</div>
<div id="framebot" class="a"></div>
<div id="frameright" class="a"></div>
</body></html>
